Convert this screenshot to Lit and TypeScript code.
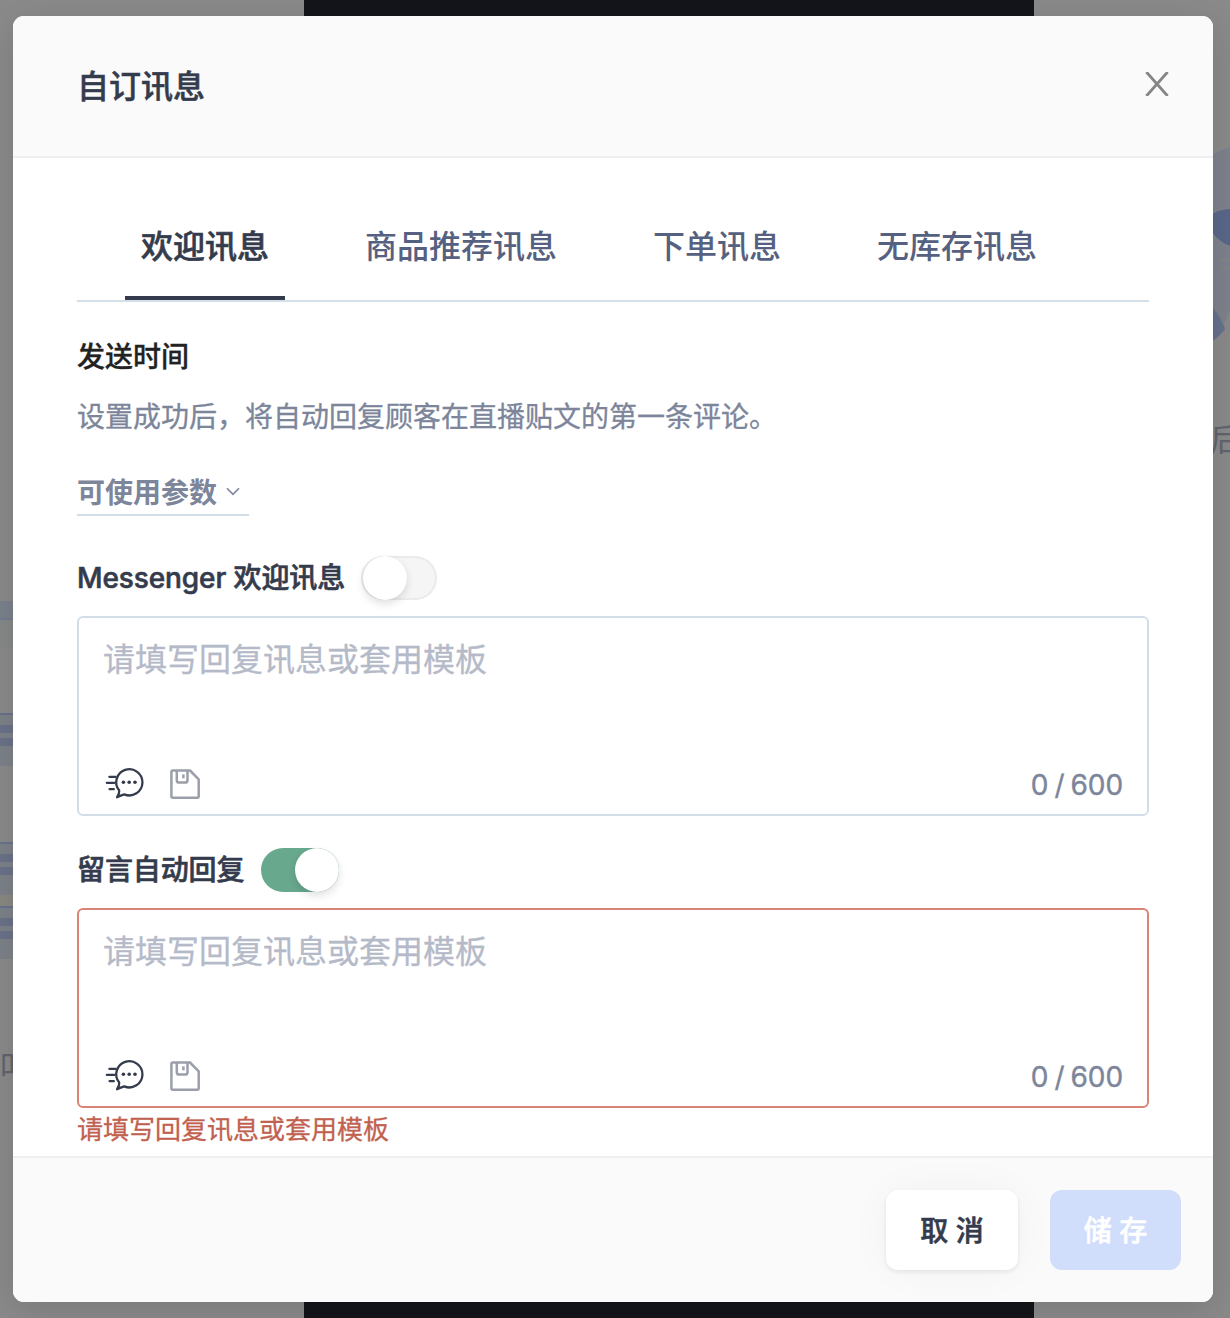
import { LitElement, html, css, svg } from "lit";
import { customElement, property, state } from "lit/decorators.js";
import { classMap } from "lit/directives/class-map.js";

const family = css`"Inter", "Noto Sans CJK SC", sans-serif`;

@customElement("page-backdrop")
class PageBackdrop extends LitElement {
  static styles = css`
    :host { display: block; }
    svg { display: block; }
    .caption { font: 400 32px "Noto Sans CJK SC", sans-serif; fill: #62646d; }
  `;

  private card(y: number) {
    return svg`
      <rect x="0" y=${y} width="40" height="53" fill="#7d8289"/>
      <rect x="0" y=${y} width="40" height="2" fill="#69728d"/>
      <rect x="0" y=${y + 12} width="40" height="8" fill="#6b7289"/>
      <rect x="0" y=${y + 25} width="40" height="8" fill="#6b7289"/>`;
  }

  render() {
    return html`
      <svg width="1230" height="1318" viewBox="0 0 1230 1318">
        <rect width="1230" height="1318" fill="#8a8a8a"/>
        <rect x="304" width="730" height="1318" fill="#14151a"/>
        <rect y="601" width="40" height="19" fill="#7b828c"/>
        <rect y="618" width="40" height="2" fill="#737d8f"/>
        <rect y="620" width="40" height="28" fill="#878888"/>
        ${this.card(713)}${this.card(842)}
        <rect y="895" width="40" height="11" fill="#8a8883"/>
        ${this.card(906)}
        <text class="caption" x="0" y="1079">叩</text>
        <path d="M1205 160Q1218 150 1230 147V310L1222 328H1205Z" fill="#7e828c"/>
        <path d="M1205 222Q1212 210 1230 209V246Q1216 241 1205 222Z" fill="#5a678a"/>
        <path d="M1205 300L1213 308Q1220 316 1225 329Q1220 337 1205 346Z" fill="#66718c"/>
        <path d="M1220 260H1230M1222 268H1230" stroke="#89887f" stroke-width="1"/>
        <text class="caption" x="1210" y="451">后</text>
      </svg>`;
  }
}

@customElement("toggle-switch")
class ToggleSwitch extends LitElement {
  @property({ type: Boolean }) on = false;

  static styles = css`
    :host { display: block; }
    .track {
      box-sizing: border-box;
      width: 76px;
      height: 44px;
      border-radius: 22px;
      background: #f5f5f5;
      box-shadow: inset 0 0 0 2px #ebebeb;
      display: flex;
      padding-left: 2px;
      cursor: pointer;
    }
    .track.on { background: #68a88d; box-shadow: none; padding-left: 34px; width: 78px; margin-left: 1px; }
    .knob {
      flex: none;
      width: 44px;
      height: 44px;
      border-radius: 50%;
      background: #fff;
      box-shadow: 0 4px 8px rgba(0, 10, 30, 0.12), 0 0 1px rgba(0, 0, 0, 0.08);
    }
  `;

  render() {
    return html`<div class=${classMap({ track: true, on: this.on })} role="switch" aria-checked=${this.on}
      @click=${() => (this.on = !this.on)}><div class="knob"></div></div>`;
  }
}

@customElement("message-field")
class MessageField extends LitElement {
  @property() label = "";
  @property({ type: Boolean }) on = false;
  @property() error = "";

  static styles = css`
    :host { display: block; font-family: ${family}; }
    .head { display: flex; align-items: center; gap: 16px; height: 44px; }
    .label {
      padding-top: 1px;
      font-size: 28px;
      line-height: 43px;
      font-weight: 500;
      color: #343b4c;
      letter-spacing: -0.1px;
      -webkit-text-stroke: 0.6px #343b4c;
      white-space: nowrap;
    }
    .box {
      box-sizing: border-box;
      height: 200px;
      margin-top: 16px;
      border: 2px solid #d3dde7;
      border-radius: 6px;
      padding: 18px 24px 9px 24px;
      display: flex;
      flex-direction: column;
      justify-content: space-between;
    }
    .box.invalid { border-color: #d98377; }
    .placeholder { font-size: 32px; line-height: 48px; color: #b5bac8; -webkit-text-stroke: 0.3px #b5bac8; }
    .tools { display: flex; align-items: center; height: 42px; }
    .tools svg { display: block; flex: none; }
    .bubble { margin-left: 1px; }
    .save { margin-left: 23px; }
    .count {
      margin-left: auto;
      padding-top: 1px;
      font-size: 28px;
      line-height: 42px;
      color: #7c859a;
      letter-spacing: -0.1px;
      word-spacing: -1.6px;
      -webkit-text-stroke: 0.4px #7c859a;
    }
    .error { font-size: 26px; line-height: 44px; color: #c1614f; -webkit-text-stroke: 0.3px #c1614f; }
  `;

  render() {
    return html`
      <div class="head">
        <span class="label">${this.label}</span>
        <toggle-switch .on=${this.on}></toggle-switch>
      </div>
      <div class=${classMap({ box: true, invalid: !!this.error })}>
        <div class="placeholder">请填写回复讯息或套用模板</div>
        <div class="tools">
          <svg class="bubble" width="42" height="36" viewBox="0 0 42 36" fill="none" stroke="#343b4c" stroke-width="2.3" stroke-linecap="round" stroke-linejoin="round">
            <path d="M15.2 24.6A13.1 13.1 0 1 1 20.3 28.4Q16.8 29.6 13.1 31.2Q15.6 27.6 15.2 24.6Z"/>
            <path d="M5.4 10.8H11.6M2.8 16.8H10.4M5.6 23.2H9.8"/>
            <g fill="#343b4c" stroke="none"><circle cx="19.4" cy="16.2" r="1.8"/><circle cx="25.2" cy="16.2" r="1.8"/><circle cx="31" cy="16.2" r="1.8"/></g>
          </svg>
          <svg class="save" width="32" height="32" viewBox="0 0 32 32" fill="none" stroke="#9b9fa9" stroke-width="2.5" stroke-linejoin="round">
            <path d="M3.9 2.5H21L29.7 11.3V28.2Q29.7 29.7 28.2 29.7H3.9Q2.4 29.7 2.4 28.2V4Q2.4 2.5 3.9 2.5Z"/>
            <path d="M7.8 2.5V12.2Q7.8 14.6 10.2 14.6H16Q18.5 14.6 18.5 12.2V2.5"/>
            <path d="M14.4 6.4V10.3"/>
          </svg>
          <span class="count">0 / 600</span>
        </div>
      </div>
      ${this.error ? html`<div class="error">${this.error}</div>` : null}`;
  }
}

@customElement("app-root")
class AppRoot extends LitElement {
  @state() private active = 0;
  private tabs = ["欢迎讯息", "商品推荐讯息", "下单讯息", "无库存讯息"];

  static styles = css`
    :host {
      display: grid;
      width: 1230px;
      height: 1318px;
      overflow: hidden;
      font-family: ${family};
    }
    page-backdrop, .modal { grid-area: 1 / 1; }
    .modal {
      z-index: 1;
      box-sizing: border-box;
      width: 1200px;
      height: 1286px;
      margin: 16px 0 0 13px;
      border-radius: 11px;
      background: #fff;
      overflow: hidden;
      box-shadow: 0 8px 36px rgba(0, 0, 0, 0.13);
      display: flex;
      flex-direction: column;
    }
    .header {
      box-sizing: border-box;
      height: 142px;
      flex: none;
      padding: 0 44px 0 64px;
      background: #fafafa;
      border-bottom: 2px solid #efefef;
      display: flex;
      align-items: center;
      justify-content: space-between;
    }
    .title { padding-top: 2px; font-size: 32px; font-weight: 500; line-height: 48px; color: #343b4c; -webkit-text-stroke: 0.5px #343b4c; }
    .close { display: block; margin-bottom: 4px; }
    .body { flex: 1; padding: 0 64px; }
    .tabs { display: flex; gap: 64px; height: 142px; padding: 0 48px; border-bottom: 2px solid #d5dfe8; }
    .tab {
      box-sizing: border-box;
      height: 142px;
      padding: 65px 16px 0;
      font-size: 32px;
      line-height: 48px;
      font-weight: 500;
      color: #566080;
      border-bottom: 4px solid transparent;
      white-space: nowrap;
      cursor: pointer;
    }
    .tab.active { color: #343b4c; border-color: #343b4c; -webkit-text-stroke: 0.6px #343b4c; }
    .subtitle { margin-top: 33px; font-size: 28px; line-height: 44px; font-weight: 500; color: #222; -webkit-text-stroke: 0.3px #222; }
    .hint { margin-top: 16px; font-size: 28px; line-height: 44px; color: #7c859a; -webkit-text-stroke: 0.3px #7c859a; }
    .params {
      display: flex;
      align-items: center;
      gap: 9px;
      width: 172px;
      height: 46px;
      margin-top: 29px;
      border-bottom: 2px solid #d3dde7;
      font-size: 28px;
      font-weight: 700;
      color: #7c859a;
      white-space: nowrap;
    }
    .first { margin-top: 40px; }
    .second { margin-top: 32px; }
    .footer {
      box-sizing: border-box;
      height: 146px;
      flex: none;
      padding: 32px 32px 0 0;
      background: #fafafa;
      border-top: 2px solid #efefef;
      display: flex;
      justify-content: flex-end;
      gap: 32px;
    }
    .btn {
      box-sizing: border-box;
      width: 132px;
      height: 80px;
      border: 0;
      padding: 2px 0 0;
      border-radius: 12px;
      background: #fff;
      color: #343b4c;
      font: 500 28px/78px ${family};
      -webkit-text-stroke: 0.6px currentColor;
      text-align: center;
      box-shadow: 0 2px 4px rgba(20, 30, 60, 0.08), 0 0 40px rgba(20, 30, 60, 0.04);
    }
    .btn.primary { width: 131px; background: #d0ddfb; color: #fff; box-shadow: none; }
  `;

  render() {
    return html`
      <page-backdrop></page-backdrop>
      <div class="modal" role="dialog">
        <div class="header">
          <div class="title">自订讯息</div>
          <svg class="close" width="24" height="24" viewBox="0 0 24 24" fill="none" stroke="#858585" stroke-width="2.8">
            <path d="M1.4 0L22.6 24M22.6 0L1.4 24"/>
          </svg>
        </div>
        <div class="body">
          <div class="tabs">
            ${this.tabs.map((t, i) => html`<div class=${classMap({ tab: true, active: i === this.active })}
              @click=${() => (this.active = i)}>${t}</div>`)}
          </div>
          <div class="subtitle">发送时间</div>
          <div class="hint">设置成功后，将自动回复顾客在直播贴文的第一条评论。</div>
          <div class="params">可使用参数
            <svg width="14" height="9" viewBox="0 0 14 9" fill="none" stroke="#7c859a" stroke-width="1.6"><path d="M1 1.2L7 7.3L13 1.2"/></svg>
          </div>
          <message-field class="first" label="Messenger 欢迎讯息"></message-field>
          <message-field class="second" label="留言自动回复" .on=${true} error="请填写回复讯息或套用模板"></message-field>
        </div>
        <div class="footer">
          <button class="btn">取 消</button>
          <button class="btn primary">储 存</button>
        </div>
      </div>`;
  }
}
